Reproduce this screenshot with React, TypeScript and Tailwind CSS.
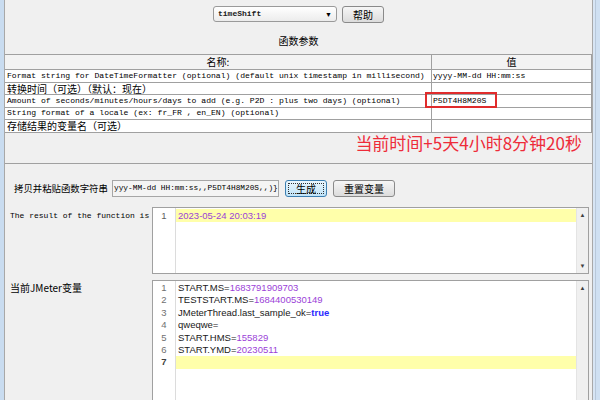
const MONO = { fontFamily: '"Liberation Mono", monospace' };
const CJK = { fontFamily: '"Noto Sans CJK SC", "Noto Sans", sans-serif' };
const CODE = { fontFamily: '"Liberation Sans", "Noto Sans CJK SC", sans-serif' };

const rows = [
  { name: "Format string for DateTimeFormatter (optional) (default unix timestamp in millisecond)", value: "yyyy-MM-dd HH:mm:ss", mono: true, h: "h-[13px]" },
  { name: "转换时间（可选）（默认：现在）", value: "", mono: false, h: "h-[12px]" },
  { name: "Amount of seconds/minutes/hours/days to add (e.g. P2D : plus two days) (optional)", value: "P5DT4H8M20S", mono: true, h: "h-[13px]", boxed: true },
  { name: "String format of a locale (ex: fr_FR , en_EN) (optional)", value: "", mono: true, h: "h-[12px]" },
  { name: "存储结果的变量名（可选）", value: "", mono: false, h: "h-[13px]" },
];

const vars: [string, string, boolean?][] = [
  ["START.MS=", "1683791909703"],
  ["TESTSTART.MS=", "1684400530149"],
  ["JMeterThread.last_sample_ok=", "true", true],
  ["qweqwe=", ""],
  ["START.HMS=", "155829"],
  ["START.YMD=", "20230511"],
];

const fnString = "yyy-MM-dd HH:mm:ss,,P5DT4H8M20S,,)}";

function Scrollbar({ down = true }: { down?: boolean }) {
  return (
    <div className="flex w-[12px] flex-col items-center justify-between border-l border-[#e4e4e4] bg-[#f0f0f0] py-[4px] text-[6px] leading-none text-[#404040]">
      <span>▲</span>
      {down && <span>▼</span>}
    </div>
  );
}

function Button({ label, focused, w }: { label: string; focused?: boolean; w: string }) {
  return (
    <div
      className={`flex h-[17px] ${w} items-center justify-center rounded-[3px] border p-[2px] ${
        focused
          ? "border-[#3c7fb1] bg-gradient-to-b from-[#eaf6fd] to-[#bfe4f9]"
          : "border-[#8a8a8a] bg-gradient-to-b from-[#f6f6f6] to-[#dcdcdc]"
      }`}
    >
      <div
        className={`flex h-full w-full items-center justify-center whitespace-nowrap text-[10px] leading-none text-black ${
          focused ? "border border-dotted border-[#303030]" : ""
        }`}
        style={CJK}
      >
        {label}
      </div>
    </div>
  );
}

export default function App() {
  return (
    <div className="flex h-[400px] w-[600px] overflow-hidden bg-[#f0f0f0]">
      <div className="w-[4px] bg-[#c9dcf0]" />
      <div className="flex w-[589px] flex-col border-l border-r border-[#a8a8a8]">
        {/* Function selector */}
        <div className="flex h-[54px] flex-col items-center">
          <div className="mt-[6px] flex gap-[5px]">
            <div className="flex h-[16px] w-[124px] items-center justify-between rounded-[3px] border border-[#9a9a9a] bg-gradient-to-b from-[#ffffff] to-[#ececec] pl-[4px] pr-[4px]">
              <span className="text-[8px] font-bold text-[#202020]" style={MONO}>timeShift</span>
              <span className="text-[7px] leading-none text-black">▼</span>
            </div>
            <div className="h-[16px]">
              <Button label="帮助" w="w-[42px]" />
            </div>
          </div>
          <div className="mt-[14px] text-[10px] leading-none text-black" style={CJK}>函数参数</div>
        </div>

        {/* Parameters table */}
        <div className="flex h-[110px] flex-col border-b border-[#a0a0a0]">
          <div className="flex h-[16px] border-y border-[#a0a0a0] bg-[#f3f3f3]">
            <div className="flex w-[427px] items-center justify-center border-r border-[#a0a0a0] text-[10px] leading-none" style={CJK}>名称:</div>
            <div className="flex flex-1 items-center justify-center border-r border-[#a0a0a0] text-[10px] leading-none" style={CJK}>值</div>
          </div>
          {rows.map((r, i) => (
            <div key={i} className={`flex ${r.h} border-b border-[#a0a0a0] bg-white`}>
              <div className="flex w-[427px] items-center whitespace-nowrap border-r border-[#a0a0a0] pl-[2px]">
                <span className={r.mono ? "text-[8.1px] leading-none text-black" : "text-[10px] leading-none text-black"} style={r.mono ? MONO : CJK}>
                  {r.name}
                </span>
              </div>
              <div className="relative flex flex-1 items-center border-r border-[#a0a0a0] pl-[1px]">
                <span className="text-[8.1px] leading-none text-black" style={MONO}>{r.value}</span>
                {r.boxed && (
                  <div className="absolute left-[-7px] top-[-3px] h-[16px] w-[72px] border-2 border-[#e02c2c]" />
                )}
              </div>
            </div>
          ))}
          <div className="flex flex-1 justify-end pr-[10px] pt-[1px]">
            <span className="text-[17px] leading-none text-[#ee2b39]" style={CJK}>当前时间+5天4小时8分钟20秒</span>
          </div>
        </div>

        {/* Function string */}
        <div className="mt-[16px] flex h-[17px] items-center pl-[9px]">
          <span className="w-[98px] whitespace-nowrap text-[9.4px] leading-none text-black" style={CJK}>拷贝并粘贴函数字符串</span>
          <div className="flex h-[17px] w-[167px] items-center overflow-hidden whitespace-nowrap border border-[#a6a6a6] bg-[#f4f4f4] pl-[1px]">
            <span className="text-[7.8px] leading-none text-black" style={MONO}>{fnString}</span>
          </div>
          <div className="ml-[6px]">
            <Button label="生成" focused w="w-[42px]" />
          </div>
          <div className="ml-[6px]">
            <Button label="重置变量" w="w-[62px]" />
          </div>
        </div>

        {/* Result */}
        <div className="mt-[10px] flex h-[67px] pl-[5px] pr-[3px]">
          <div className="w-[142px] pt-[5px] text-[8px] leading-none text-black" style={MONO}>
            The result of the function is
          </div>
          <div className="flex flex-1 border border-[#a0a0a0] bg-white">
            <div className="w-[23px] border-r border-[#dcdcdc] pt-[1px] text-center text-[9.5px] leading-[13px] text-[#606060]" style={CODE}>1</div>
            <div className="flex-1 pt-[1px]">
              <div className="h-[13px] bg-[#ffffaa] pl-[2px] text-[9.5px] leading-[13px] text-[#9b3fd8]" style={CODE}>2023-05-24 20:03:19</div>
            </div>
            <Scrollbar />
          </div>
        </div>

        {/* JMeter variables */}
        <div className="mt-[6px] flex flex-1 pl-[5px] pr-[3px]">
          <div className="w-[142px] whitespace-nowrap pt-[3px] text-[10px] leading-none text-black" style={CJK}>
            当前JMeter变量
          </div>
          <div className="flex flex-1 border border-b-0 border-[#a0a0a0] bg-white">
            <div className="w-[23px] border-r border-[#dcdcdc] pt-[1px] text-center text-[9.5px] leading-[12.4px] text-[#707070]" style={CODE}>
              {[1, 2, 3, 4, 5, 6].map((n) => (
                <div key={n}>{n}</div>
              ))}
              <div className="font-bold text-[#404040]">7</div>
            </div>
            <div className="flex-1 pt-[1px] text-[9.5px] leading-[12.4px]" style={CODE}>
              {vars.map(([k, v, kw], i) => (
                <div key={i} className="whitespace-nowrap pl-[2px] text-[#202020]">
                  {k}
                  <span className={kw ? "font-bold text-[#2a2aff]" : "text-[#9b3fd8]"}>{v}</span>
                </div>
              ))}
              <div className="h-[12.4px] bg-[#ffffaa]" />
            </div>
            <Scrollbar down={false} />
          </div>
        </div>
      </div>
      <div className="flex flex-1">
        <div className="w-[2px] bg-[#d7e5f4]" />
        <div className="w-[1px] bg-[#b8c8da]" />
        <div className="flex-1 bg-[#cfe0f2]" />
      </div>
    </div>
  );
}
